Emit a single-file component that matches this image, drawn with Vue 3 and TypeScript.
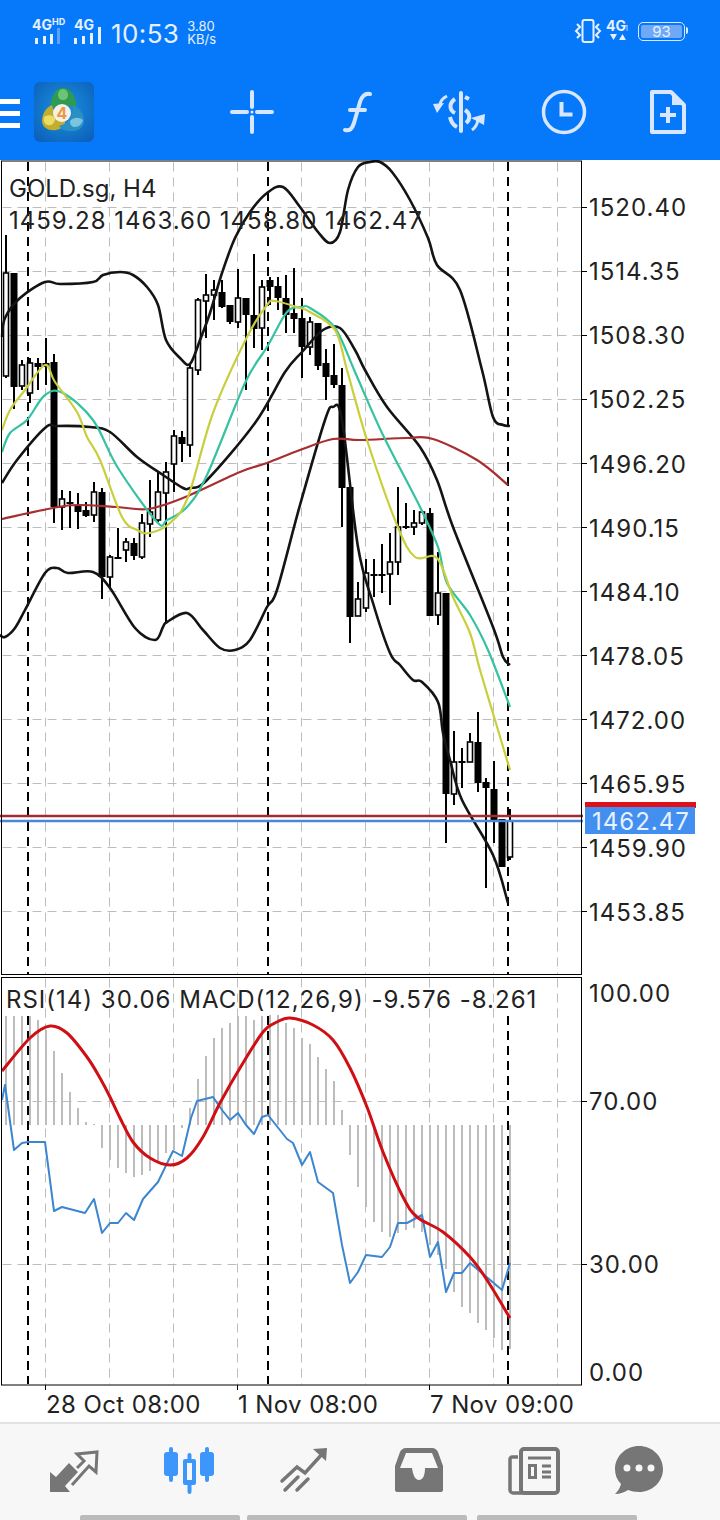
<template>
  <div class="screen">
    <header class="top">
      <div class="status">
        <div class="status-left">
          <svg class="sig" width="36" height="32" viewBox="0 -4 36 32">
            <text x="0" y="12" class="sig-label">4G</text>
            <text x="20" y="7" class="sig-hd">HD</text>
            <rect x="3" y="20" width="3" height="6" fill="#e6f0ff" />
            <rect x="11" y="18" width="3" height="8" fill="#e6f0ff" />
            <rect x="18" y="16" width="3" height="10" fill="#e6f0ff" />
            <rect x="25" y="10" width="3" height="16" fill="#5ba2f8" />
          </svg>
          <svg class="sig" width="32" height="32" viewBox="0 -4 32 32">
            <text x="0" y="12" class="sig-label">4G</text>
            <rect x="0" y="20" width="3" height="6" fill="#e6f0ff" />
            <rect x="8" y="18" width="3" height="8" fill="#e6f0ff" />
            <rect x="16" y="15" width="3" height="11" fill="#e6f0ff" />
            <rect x="24" y="9" width="3" height="17" fill="#e6f0ff" />
          </svg>
          <span class="clock">10:53</span>
          <span class="speed"><b>3.80</b><b>KB/s</b></span>
        </div>
        <div class="status-right">
          <svg width="28" height="26" viewBox="0 0 28 26" fill="none" stroke="#e6f0ff">
            <rect x="8.5" y="2" width="11" height="22" rx="2" stroke-width="2" />
            <path d="M3 6l3 3-4 4 4 4-3 3M25 6l-3 3 4 4-4 4 3 3" stroke-width="2" />
          </svg>
          <svg width="24" height="26" viewBox="0 0 24 26">
            <text x="0" y="13" class="sig-label">4G</text>
            <text x="19" y="13" class="sig-one">1</text>
            <path d="M4 16h7l-3.500 6zM13 22h7l-3.500-6z" fill="#e6f0ff" />
          </svg>
          <div class="battery">
            <span class="battery-fill">93</span>
          </div>
        </div>
      </div>

      <div class="toolbar">
        <div class="burger"><i></i><i></i><i></i></div>
        <svg class="logo" width="60" height="60" viewBox="34 82 60 60">
          <defs>
            <radialGradient id="logoBg" cx="0.5" cy="0.45" r="0.7">
              <stop offset="0" stop-color="#1a93e0" />
              <stop offset="1" stop-color="#0c5fb8" />
            </radialGradient>
          </defs>
          <rect x="34" y="82" width="60" height="60" rx="6" fill="url(#logoBg)" />
          <path d="M63 88c7 0 11 6 13 14 1 4-1 6-4 5-6-3-12-3-17 0-3 1-5-1-4-5 2-8 5-14 12-14z" fill="#2f9a52" />
          <path d="M63 89c3 0 5 3 5 6s-2 5-5 5-5-2-5-5 2-6 5-6z" fill="#6cc476" />
          <path d="M52 105c2 8 6 13 13 16 1 5-4 8-9 9-7 1-13-2-14-8 0-7 3-14 10-17z" fill="#c2ae2e" />
          <path d="M44 117c4-3 9-2 11 1 0 5-3 8-7 7-3 0-5-4-4-8z" fill="#ecdc63" />
          <path d="M73 105c7 3 11 9 11 16 0 7-7 11-14 10-5 0-9-2-11-5 7-2 14-6 14-21z" fill="#2a8fc4" />
          <path d="M70 121c4-4 9-4 13-1-1 4-4 7-8 7-3 0-5-2-5-6z" fill="#7cc3de" />
          <circle cx="62" cy="113" r="9" fill="#f6f1e8" />
          <text x="62" y="119" class="logo-four">4</text>
        </svg>
        <div class="tools">
          <svg width="60" height="60" viewBox="222 82 60 60" fill="none" stroke="#d8e6ff" stroke-width="4" stroke-linecap="round">
            <path d="M232 112h15M257 112h15M252 92v15M252 117v15" />
            <circle cx="252" cy="112" r="1.500" fill="#d8e6ff" stroke="none" />
          </svg>
          <svg width="60" height="60" viewBox="326 82 60 60" fill="none" stroke="#d8e6ff" stroke-width="4" stroke-linecap="round">
            <path d="M345 130c5 1 7-1 9-7l6-21c2-6 5-9 10-8" />
            <path d="M350 110h15" />
          </svg>
          <svg width="60" height="60" viewBox="431 82 60 60" fill="none" stroke="#d8e6ff">
            <path d="M462 93v38" stroke-width="4" stroke-linecap="round" />
            <path d="M456 99c-6 4-6 11 0 14M451 117c1 5 3 8 7 10M466 110c5 3 6 9 1 13M466 97l4 2" stroke-width="4" />
            <path d="M448 96c-4 2-6 4-7 8" stroke-width="3" />
            <path d="M434 104l11-1-7 10z" fill="#d8e6ff" stroke="none" />
            <path d="M473 130c3-2 5-5 6-10" stroke-width="3" />
            <path d="M472 118l14-4-1 11z" fill="#d8e6ff" stroke="none" />
          </svg>
          <svg width="60" height="60" viewBox="534 82 60 60" fill="none" stroke="#d8e6ff" stroke-width="3.500">
            <circle cx="564" cy="112" r="20.500" />
            <path d="M561.500 102v12.500h11" stroke-width="4" />
          </svg>
          <svg width="60" height="60" viewBox="638 82 60 60" fill="none" stroke="#d8e6ff" stroke-width="4">
            <path d="M652 92h19l13 13v27h-32z" stroke-linejoin="round" />
            <path d="M672 92l12 13h-12z" fill="#d8e6ff" stroke="none" />
            <path d="M660 115h16M668 107v16" />
          </svg>
        </div>
      </div>
    </header>

    <svg class="pane" width="720" height="816" viewBox="0 160 720 816">
      <g class="grid" transform="translate(0.5 0.5)">
        <line v-for="x in gridX" :key="'mx' + x" :x1="x" :x2="x" y1="162" y2="974" />
        <line v-for="t in priceTicks" :key="'my' + t.y" x1="2" x2="582" :y1="t.y" :y2="t.y" />
      </g>
      <line v-for="x in markerX" :key="'mm' + x" class="marker" :x1="x" :x2="x" y1="162" y2="974" />

      <g v-for="c in candles" :key="c.x">
        <line class="wick" :x1="c.x" :x2="c.x" :y1="c.high" :y2="c.low" />
        <rect
          :class="c.up ? 'body-up' : 'body-down'"
          :x="c.up ? c.x - 2.5 : c.x - 3.5"
          :y="c.top"
          :width="c.up ? 5 : 7"
          :height="Math.max(c.bottom - c.top, 2)"
        />
      </g>

      <path class="line band" :d="smooth(upperBand)" />
      <path class="line band" :d="smooth(midBand)" />
      <path class="line band" :d="smooth(lowerBand)" />
      <path class="line ma-long" :d="smooth(maLong)" />
      <path class="line ma-teal" :d="smooth(maTeal)" />
      <path class="line ma-yellow" :d="smooth(maYellow)" />

      <line x1="0" x2="583" y1="816" y2="816" class="bid" />
      <line x1="0" x2="583" y1="821" y2="821" class="ask" />

      <rect x="1.5" y="161" width="580" height="813.5" class="frame" />
      <text x="9" y="197" class="label">GOLD.sg, H4</text>
      <text x="9" y="229" class="label nums">1459.28 1463.60 1458.80 1462.47</text>

      <g v-for="t in priceTicks" :key="t.label">
        <line x1="582" x2="587" :y1="t.y + 0.5" :y2="t.y + 0.5" class="tick" />
        <text x="589" :y="t.y + (t.y > 450 ? 10 : 9)" class="label nums">{{ t.label }}</text>
      </g>

      <rect x="585" y="802" width="111" height="6" fill="#e0101a" />
      <rect x="585" y="807" width="110" height="27" fill="#438ff0" />
      <text x="592" y="830" class="label nums price">1462.47</text>
    </svg>

    <svg class="pane" width="720" height="414" viewBox="0 976 720 414">
      <g class="grid" transform="translate(0.5 0.5)">
        <line v-for="x in gridX" :key="'lx' + x" :x1="x" :x2="x" y1="978" y2="1384" />
        <line x1="2" x2="582" y1="1101" y2="1101" />
        <line x1="2" x2="582" y1="1264" y2="1264" />
      </g>
      <line v-for="b in histogram" :key="b.x" class="hist" :x1="b.x" :x2="b.x" y1="1125" :y2="b.y" />
      <line v-for="x in markerX" :key="'lm' + x" class="marker" :x1="x" :x2="x" y1="1016" y2="1384" />
      <polyline class="line rsi" :points="rsi.map((p) => p.join(',')).join(' ')" />
      <path class="line signal" :d="smooth(signal)" />

      <rect x="1.5" y="977.5" width="580" height="407.5" class="frame" />
      <text x="6" y="1008" class="label nums">RSI(14) 30.06 MACD(12,26,9) -9.576 -8.261</text>
      <text x="589" y="1002" class="label nums">100.00</text>
      <text x="589" y="1110" class="label nums">70.00</text>
      <text x="589" y="1273" class="label nums">30.00</text>
      <text x="589" y="1381" class="label nums">0.00</text>
      <line x1="582" x2="587" y1="1101.5" y2="1101.5" class="tick" />
      <line x1="582" x2="587" y1="1264.5" y2="1264.5" class="tick" />
      <line x1="45.5" x2="45.5" y1="1385" y2="1390" class="tick" />
      <line x1="237.5" x2="237.5" y1="1385" y2="1390" class="tick" />
      <line x1="429.5" x2="429.5" y1="1385" y2="1390" class="tick" />
    </svg>

    <div class="times">
      <span>28 Oct 08:00</span>
      <span>1 Nov 08:00</span>
      <span>7 Nov 09:00</span>
    </div>

    <nav class="tabs">
      <svg width="70" height="60" viewBox="39 1436 70 60">
        <path d="M50 1492v-20l6 5 13-14 9 9-13 14 5 6z" fill="#767676" />
        <path d="M72 1485l17-19 7 6 1-20-20 2 7 7-7 7" fill="none" stroke="#767676" stroke-width="3" />
      </svg>
      <svg width="70" height="60" viewBox="152 1436 70 60" fill="#3d97fb">
        <rect x="164" y="1452" width="14" height="24" rx="3" />
        <rect x="169" y="1447" width="4" height="35" rx="2" />
        <rect x="200" y="1452" width="14" height="24" rx="3" />
        <rect x="205" y="1447" width="4" height="35" rx="2" />
        <rect x="187.500" y="1453" width="4" height="41" rx="2" />
        <rect x="183" y="1459" width="13" height="26" rx="2" />
        <rect x="187" y="1463" width="5" height="17" fill="#f7f7f7" />
      </svg>
      <svg width="70" height="60" viewBox="265 1436 70 60" fill="none" stroke="#767676" stroke-width="3.500" stroke-linecap="round">
        <path d="M282 1481l15-14 8 6 19-21" />
        <path d="M285 1490l13-13M297 1490l11-11" />
        <path d="M313 1449l14-1-1 13z" fill="#767676" stroke="none" />
      </svg>
      <svg width="70" height="60" viewBox="378 1436 70 60">
        <path
          d="M406 1448h26c3 0 5 2 6 4l5 14v24c0 1-1 2-2 2h-44c-1 0-2-1-2-2v-24l5-14c1-2 3-4 6-4zM406 1453l-6 15h12c1 7 3 12 7 12s6-5 6-12h13l-6-15z"
          fill="#767676"
          fill-rule="evenodd"
        />
      </svg>
      <svg width="70" height="60" viewBox="491 1436 70 60" fill="none" stroke="#767676">
        <rect x="521" y="1449" width="37" height="44" rx="3" stroke-width="4" />
        <path d="M518 1457h-6c-1 0-2 1-2 2v31c0 2 2 3 3 3h10" stroke-width="3.500" />
        <path d="M528 1458h23M542 1466h9M542 1472h9M542 1477h9" stroke-width="3" />
        <rect x="529.500" y="1465.500" width="6" height="12" stroke-width="3" />
      </svg>
      <svg width="70" height="60" viewBox="604 1436 70 60">
        <path d="M639 1446c13 0 24 10 24 23s-11 23-24 23c-4 0-8-1-11-2-3 2-8 4-13 4 3-3 5-6 6-10-4-4-6-9-6-15 0-13 11-23 24-23z" fill="#767676" />
        <circle cx="627" cy="1468" r="3.500" fill="#f7f7f7" />
        <circle cx="639" cy="1468" r="3.500" fill="#f7f7f7" />
        <circle cx="651" cy="1468" r="3.500" fill="#f7f7f7" />
      </svg>
    </nav>

    <div class="gesture">
      <i class="g1"></i>
      <i class="g2"></i>
      <i class="g3"></i>
    </div>
  </div>
</template>

<script setup lang="ts">
type Pt = [number, number];

const gridX = [45, 109, 173, 237, 301, 365, 429, 493, 557];
const markerX = [28, 268, 508];

const priceTicks = [
  ["1520.40", 207],
  ["1514.35", 271],
  ["1508.30", 335],
  ["1502.25", 399],
  ["1496.20", 463],
  ["1490.15", 527],
  ["1484.10", 591],
  ["1478.05", 655],
  ["1472.00", 719],
  ["1465.95", 783],
  ["1459.90", 847],
  ["1453.85", 911],
].map(([label, y]) => ({ label: label as string, y: y as number }));

// high, low, top of body, bottom of body, 1 = hollow
const rawCandles: number[][] = [
  [235, 378, 273, 376, 1], [273, 409, 273, 387, 0], [360, 390, 365, 386, 1], [358, 403, 363, 393, 1],
  [358, 390, 363, 367, 0], [338, 385, 363, 367, 0], [354, 523, 362, 507, 0], [490, 530, 499, 507, 1],
  [491, 528, 502, 504, 0], [493, 529, 506, 512, 0], [502, 517, 510, 516, 0], [482, 522, 492, 515, 1],
  [488, 599, 492, 577, 0], [555, 588, 557, 577, 1], [528, 558, 557, 558, 0], [538, 562, 542, 550, 1],
  [538, 560, 543, 556, 0], [514, 559, 523, 557, 1], [480, 537, 512, 524, 1], [472, 522, 492, 520, 1],
  [462, 622, 472, 493, 1], [430, 492, 436, 464, 1], [431, 462, 437, 444, 0], [363, 457, 368, 445, 1],
  [298, 375, 300, 370, 1], [274, 338, 295, 301, 1], [280, 320, 290, 295, 1], [280, 308, 292, 307, 0],
  [305, 324, 305, 322, 0], [269, 328, 298, 322, 1], [298, 390, 298, 315, 0], [254, 348, 315, 329, 0],
  [280, 350, 287, 328, 1], [277, 305, 280, 287, 0], [277, 310, 286, 298, 0], [275, 333, 298, 315, 0],
  [268, 333, 313, 319, 0], [298, 378, 318, 347, 0], [317, 355, 322, 347, 1], [323, 370, 323, 366, 0],
  [349, 400, 363, 377, 0], [344, 388, 375, 385, 0], [368, 527, 385, 488, 0], [487, 643, 487, 617, 0],
  [582, 616, 599, 616, 1], [559, 612, 573, 608, 1], [559, 597, 574, 576, 0], [544, 593, 574, 576, 0],
  [533, 605, 562, 574, 1], [487, 575, 527, 562, 1], [503, 529, 526, 528, 0], [510, 535, 523, 527, 1],
  [510, 525, 512, 523, 1], [508, 616, 513, 616, 0], [552, 625, 593, 615, 1], [593, 843, 593, 794, 0],
  [731, 805, 762, 794, 1], [748, 788, 761, 763, 0], [733, 762, 742, 762, 1], [712, 792, 742, 783, 0],
  [778, 888, 782, 788, 0], [761, 843, 789, 822, 0], [819, 867, 819, 867, 0], [809, 860, 821, 857, 1],
];

const candles = rawCandles.map(([high, low, top, bottom, up], i) => ({
  x: 6 + i * 8,
  high,
  low,
  top,
  bottom,
  up: up === 1,
}));

const upperBand: Pt[] = [
  [2, 337], [5, 318], [20, 298], [45, 282], [60, 284], [93, 282], [103, 275], [120, 272], [133, 275], [147, 287],
  [158, 305], [166, 340], [180, 358], [190, 364], [200, 340], [210, 313], [222, 273], [235, 238], [250, 212],
  [267, 193], [283, 187], [300, 207], [318, 232], [330, 243], [340, 232], [348, 190], [358, 167], [370, 162],
  [380, 162], [392, 172], [410, 200], [428, 238], [437, 265], [460, 290], [482, 370], [493, 417], [503, 425], [510, 426],
];
const midBand: Pt[] = [
  [2, 483], [17, 460], [45, 428], [57, 426], [90, 427], [110, 432], [137, 457], [163, 475], [183, 488], [190, 488],
  [207, 480], [255, 423], [285, 372], [302, 352], [323, 330], [340, 328], [355, 350], [365, 370], [387, 407], [420, 447],
  [437, 480], [453, 527], [493, 627], [503, 657], [510, 665],
];
const lowerBand: Pt[] = [
  [0, 635], [5, 637], [15, 628], [25, 610], [45, 573], [57, 568], [68, 573], [93, 572], [110, 588], [135, 628], [155, 640],
  [163, 627], [167, 622], [187, 613], [203, 630], [220, 648], [235, 650], [250, 640], [267, 607], [277, 590], [300, 505],
  [325, 420], [333, 407], [342, 420], [358, 547], [373, 603], [390, 653], [400, 665], [413, 680], [422, 682], [438, 702],
  [443, 733], [450, 760], [462, 800], [493, 855], [508, 903],
];
const maTeal: Pt[] = [
  [2, 452], [10, 433], [27, 420], [45, 395], [63, 393], [93, 420], [118, 468], [157, 522], [167, 520], [187, 507], [207, 475],
  [245, 383], [267, 347], [287, 312], [302, 307], [310, 308], [335, 328], [355, 372], [382, 433], [420, 507], [438, 547],
  [447, 583], [470, 615], [488, 650], [510, 707],
];
const maYellow: Pt[] = [
  [2, 430], [10, 410], [25, 390], [45, 365], [55, 382], [77, 412], [87, 437], [100, 460], [122, 517], [137, 530], [150, 533],
  [170, 523], [188, 497], [213, 413], [247, 337], [267, 305], [275, 301], [300, 308], [310, 312], [335, 330], [347, 370],
  [367, 440], [397, 525], [415, 557], [437, 558], [453, 597], [470, 633], [480, 670], [495, 720], [510, 770],
];
const maLong: Pt[] = [
  [2, 519], [53, 508], [77, 505], [117, 507], [148, 509], [183, 498], [240, 472], [267, 463], [300, 450], [333, 439],
  [360, 440], [407, 438], [433, 439], [477, 460], [508, 485],
];

const rsi: Pt[] = [
  [2, 1100], [5, 1085], [14, 1150], [22, 1143], [28, 1142], [45, 1142], [54, 1211], [62, 1207], [85, 1213], [94, 1199],
  [102, 1233], [110, 1223], [118, 1223], [126, 1213], [134, 1220], [143, 1199], [158, 1182], [173, 1151], [182, 1156],
  [191, 1118], [197, 1101], [213, 1097], [222, 1110], [230, 1120], [238, 1113], [246, 1125], [254, 1134], [262, 1117],
  [268, 1115], [287, 1139], [293, 1143], [302, 1165], [310, 1152], [318, 1182], [333, 1193], [342, 1245], [350, 1283],
  [358, 1272], [366, 1255], [382, 1257], [390, 1247], [398, 1223], [407, 1223], [422, 1215], [430, 1257], [438, 1242],
  [446, 1292], [454, 1273], [462, 1273], [470, 1263], [502, 1290], [510, 1263],
];
const signal: Pt[] = [
  [2, 1071], [30, 1038], [50, 1026], [67, 1033], [87, 1057], [100, 1078], [110, 1097], [120, 1118], [133, 1142], [150, 1158],
  [170, 1165], [187, 1158], [203, 1137], [220, 1103], [240, 1068], [263, 1032], [277, 1022], [290, 1018], [313, 1025],
  [333, 1040], [350, 1068], [367, 1107], [383, 1152], [403, 1197], [417, 1217], [443, 1232], [470, 1257], [487, 1280], [510, 1318],
];

const histEnds = [
  1016, 1016, 1016, 1016, 1020, 1030, 1051, 1073, 1092, 1108, 1122, 1124, 1148, 1160, 1168, 1173, 1177, 1175, 1171, 1163,
  1153, 1150, 1128, 1108, 1079, 1056, 1038, 1028, 1023, 1016, 1016, 1020, 1016, 1015, 1015, 1023, 1028, 1038, 1044, 1057,
  1069, 1081, 1110, 1155, 1187, 1207, 1222, 1232, 1237, 1233, 1230, 1228, 1232, 1245, 1255, 1269, 1292, 1307, 1313, 1323,
  1330, 1338, 1350, 1349,
];
const histogram = histEnds.map((y, i) => ({ x: 6 + i * 8, y }));

// catmull-rom through the points, so the MA curves don't look faceted
function smooth(pts: Pt[]): string {
  let d = `M${pts[0][0]} ${pts[0][1]}`;
  for (let i = 0; i < pts.length - 1; i++) {
    const p0 = pts[Math.max(i - 1, 0)];
    const p1 = pts[i];
    const p2 = pts[i + 1];
    const p3 = pts[Math.min(i + 2, pts.length - 1)];
    const c1x = p1[0] + (p2[0] - p0[0]) / 6;
    const c1y = p1[1] + (p2[1] - p0[1]) / 6;
    const c2x = p2[0] - (p3[0] - p1[0]) / 6;
    const c2y = p2[1] - (p3[1] - p1[1]) / 6;
    d += `C${c1x.toFixed(1)} ${c1y.toFixed(1)} ${c2x.toFixed(1)} ${c2y.toFixed(1)} ${p2[0]} ${p2[1]}`;
  }
  return d;
}
</script>

<style>
html,
body {
  margin: 0;
  background: #fff;
}
</style>

<style scoped>
.screen {
  width: 720px;
  height: 1520px;
  overflow: hidden;
  display: flex;
  flex-direction: column;
  background: #fff;
  font-family: Inter, "Liberation Sans", sans-serif;
}

.top {
  height: 160px;
  background: #0679fb;
  display: flex;
  flex-direction: column;
}

.status {
  height: 64px;
  display: flex;
  justify-content: space-between;
  padding: 18px 32px 0 32px;
  box-sizing: border-box;
}

.status-left,
.status-right {
  display: flex;
  align-items: flex-start;
}

.sig {
  margin: -4px 6px 0 0;
}

.sig-label {
  font: 700 14px Inter, sans-serif;
  fill: #e6f0ff;
}

.sig-hd {
  font: 700 9px Inter, sans-serif;
  fill: #e6f0ff;
}

.sig-one {
  font: 400 7px Inter, sans-serif;
  fill: #e6f0ff;
}

.clock {
  margin-left: -1px;
  font-size: 26px;
  line-height: 32px;
  letter-spacing: 0.4px;
  color: #e6f0ff;
}

.speed {
  margin-left: 8px;
  margin-top: 2px;
  display: flex;
  flex-direction: column;
  color: #e6f0ff;
}

.speed b {
  font-weight: 400;
  font-size: 13px;
  line-height: 13px;
}

.status-right {
  gap: 4px;
}

.battery {
  position: relative;
  width: 41px;
  height: 13px;
  margin: 4px 3px 0 4px;
  padding: 2px;
  border: 1px solid #dbe9ff;
  border-radius: 5px;
  display: flex;
}

.battery::after {
  content: "";
  position: absolute;
  right: -4px;
  top: 4px;
  width: 2px;
  height: 7px;
  background: #dbe9ff;
  border-radius: 0 2px 2px 0;
}

.battery-fill {
  flex: 1;
  background: #6ea8f6;
  border-radius: 2px;
  color: #e6f0ff;
  font-size: 15px;
  line-height: 13px;
  text-align: center;
}

.toolbar {
  height: 96px;
  display: flex;
  align-items: flex-start;
  padding-top: 18px;
  box-sizing: border-box;
}

.burger {
  width: 20px;
  margin-top: 17px;
  display: flex;
  flex-direction: column;
  gap: 7px;
}

.burger i {
  height: 5px;
  background: #fff;
}

.logo {
  margin-left: 14px;
}

.logo-four {
  font: 700 16px Inter, sans-serif;
  fill: #ec9a43;
  text-anchor: middle;
}

.tools {
  margin-left: auto;
  margin-right: 22px;
  display: flex;
  gap: 44px;
}

.pane {
  display: block;
  flex: none;
}

.grid line {
  stroke: #bdbdbd;
  stroke-width: 1;
  stroke-dasharray: 9 6;
}

.marker {
  stroke: #000;
  stroke-width: 2;
  stroke-dasharray: 9 6;
}

.wick {
  stroke: #000;
  stroke-width: 2;
}

.body-up {
  fill: #fff;
  stroke: #000;
  stroke-width: 1.6;
}

.body-down {
  fill: #000;
}

.line {
  fill: none;
  stroke-linejoin: round;
}

.band {
  stroke: #141414;
  stroke-width: 2.6;
}

.ma-long {
  stroke: #a82e30;
  stroke-width: 2.2;
}

.ma-teal {
  stroke: #35c2a0;
  stroke-width: 2.2;
}

.ma-yellow {
  stroke: #c9cf3c;
  stroke-width: 2.2;
}

.bid {
  stroke: #a32a30;
  stroke-width: 2.4;
}

.ask {
  stroke: #4a88dc;
  stroke-width: 2.4;
}

.frame {
  fill: none;
  stroke: #000;
  stroke-width: 1;
}

.tick {
  stroke: #000;
  stroke-width: 1;
}

.label {
  font: 400 24px Inter, "Liberation Sans", sans-serif;
  fill: #222;
}

.nums {
  letter-spacing: 1px;
}

.price {
  fill: #e8f1ff;
}

.hist {
  stroke: #bcbcbc;
  stroke-width: 2;
}

.rsi {
  stroke: #3b86cf;
  stroke-width: 2;
}

.signal {
  stroke: #cf0f14;
  stroke-width: 3;
}

.times {
  height: 32px;
  padding: 1px 0 0 46px;
  box-sizing: border-box;
  display: flex;
  font-size: 24px;
  line-height: 28px;
  letter-spacing: 0.4px;
  color: #222;
}

.times span {
  width: 192px;
}

.tabs {
  flex: 1;
  background: #f7f7f7;
  border-top: 2px solid #e2e2e2;
  padding: 12px 46px 0 39px;
  display: flex;
  justify-content: space-between;
  align-items: flex-start;
  box-sizing: border-box;
}

.gesture {
  height: 5px;
  background: #f7f7f7;
  display: flex;
  padding-left: 80px;
}

.gesture i {
  height: 5px;
  background: #bbb;
  border-radius: 2px 2px 0 0;
}

.g1 {
  width: 160px;
}

.g2 {
  width: 220px;
  margin-left: 7px;
}

.g3 {
  width: 160px;
  margin-left: 10px;
}
</style>
